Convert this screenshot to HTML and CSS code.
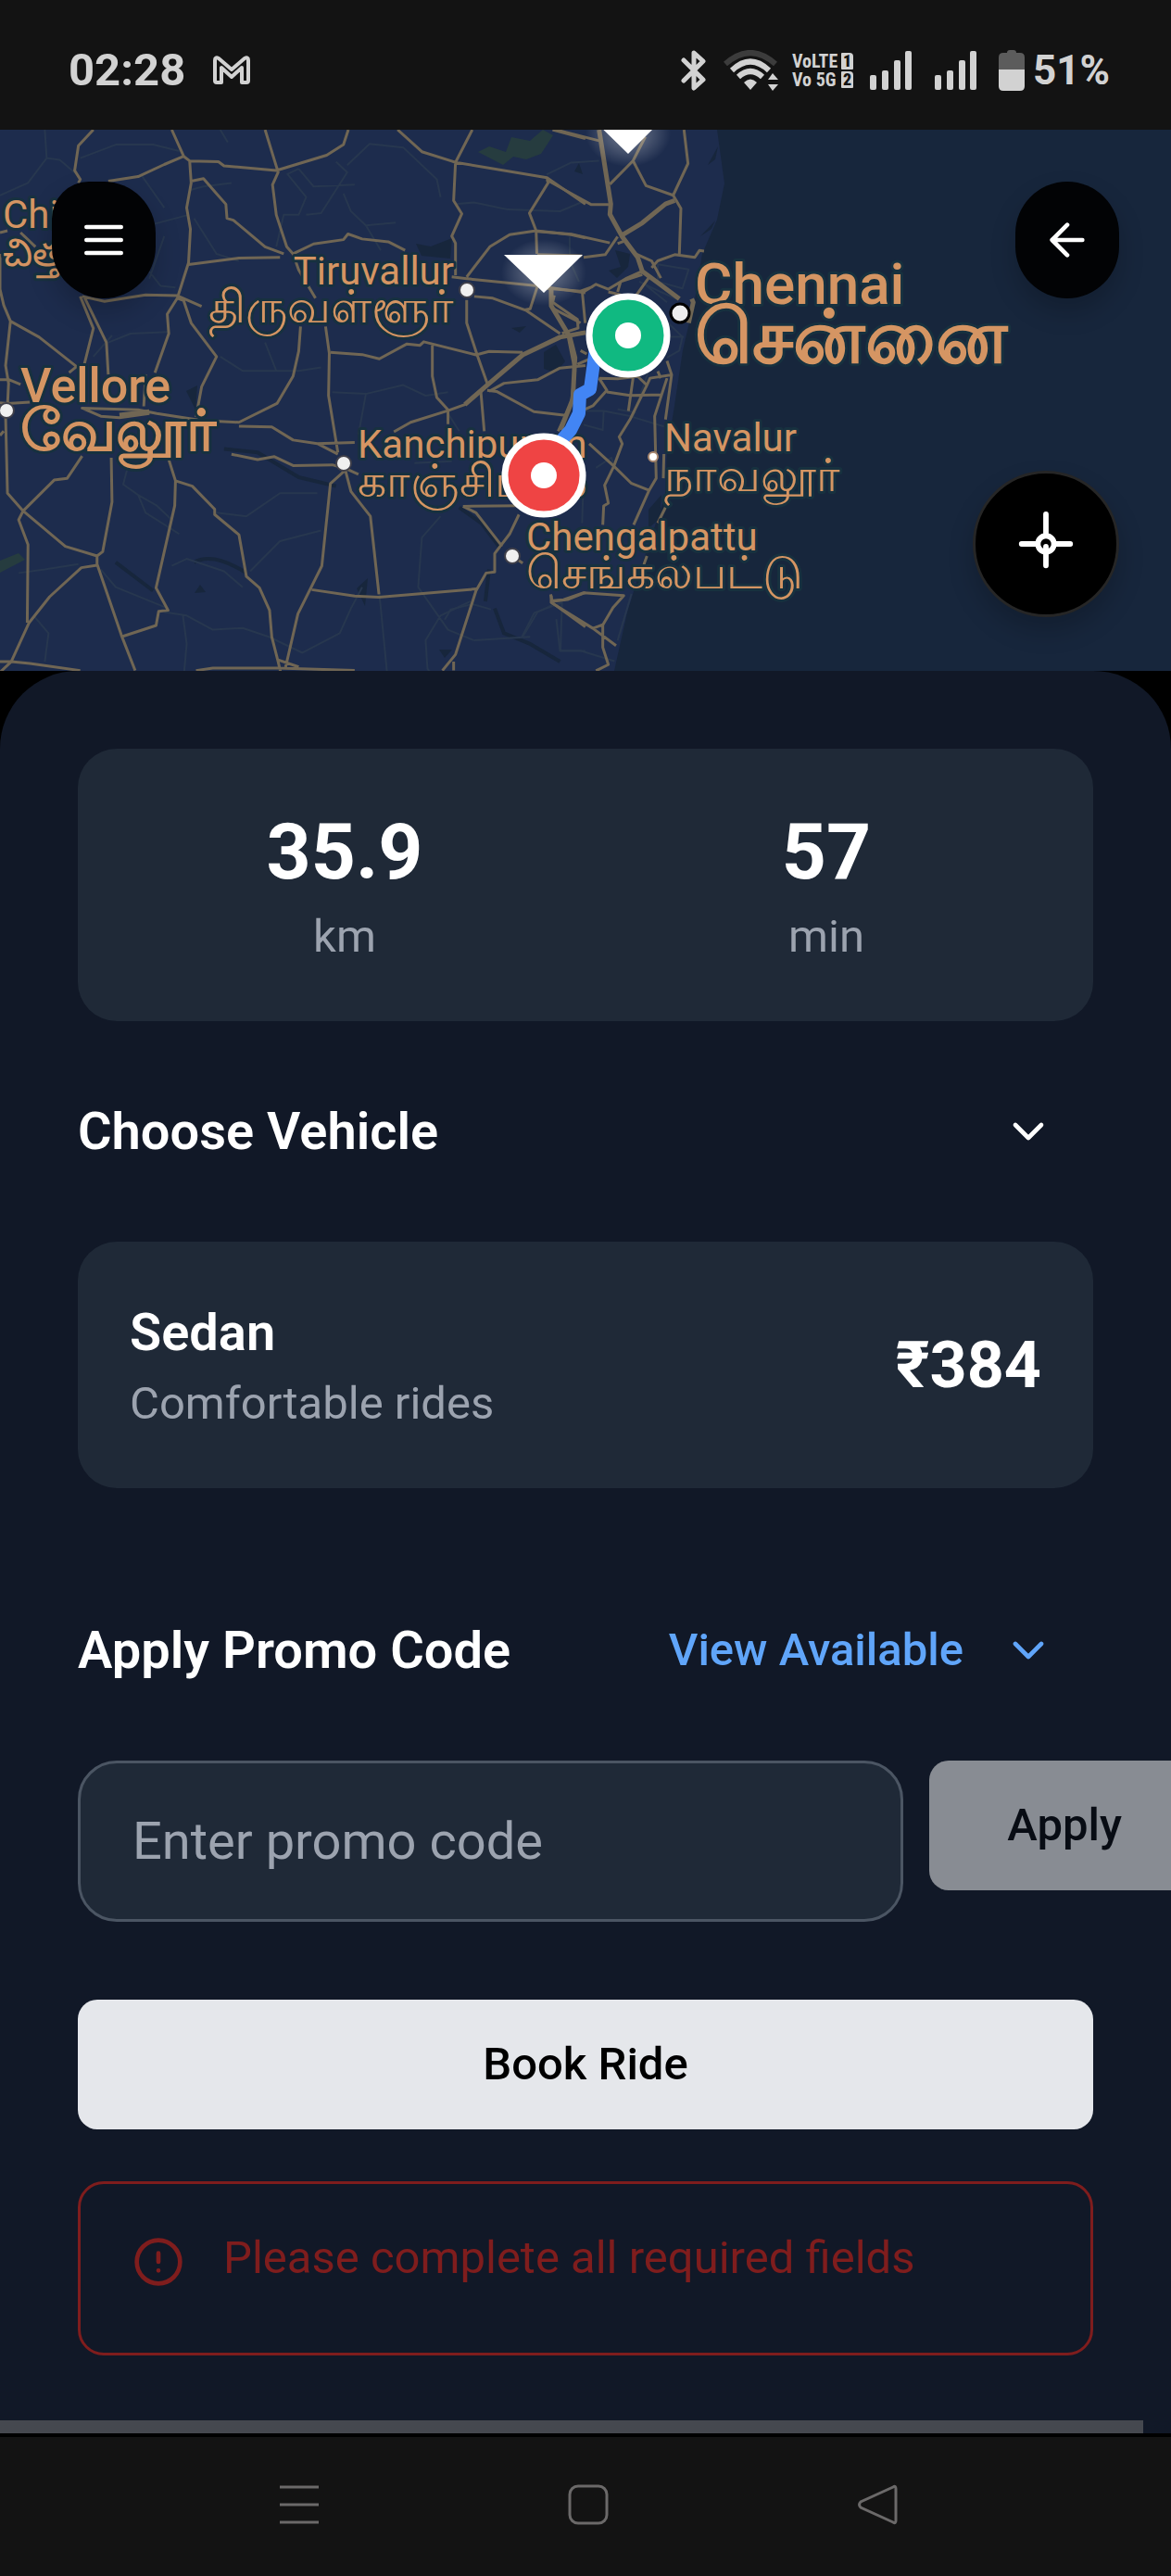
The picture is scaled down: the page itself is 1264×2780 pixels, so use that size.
FILE: index.html
```html
<!DOCTYPE html>
<html lang="en">
<head>
<meta charset="utf-8">
<meta name="viewport" content="width=device-width, initial-scale=1">
<title>Book a ride</title>
<link rel="stylesheet" href="styles.css">
</head>
<body>
<header class="status">
  <div class="status-group">
    <time class="clock">02:28</time>
    <svg class="mail" width="40" height="32" viewBox="0 0 40 32" aria-label="Gmail"><path d="M2 27V5Q2 1 6 3L20 15L34 3Q38 1 38 5V27Q38 29 36 29H31V13L20 23L9 13V29H4Q2 29 2 27Z" fill="none" stroke="#d2d2d2" stroke-width="4" stroke-linejoin="round"/></svg>
  </div>
  <div class="status-group status-right">
    <svg width="28" height="44" viewBox="0 0 28 44" aria-label="Bluetooth"><path d="M3 11L24 32L14 41V3L24 12L3 33" fill="none" stroke="#d2d2d2" stroke-width="5" stroke-linejoin="round" stroke-linecap="round"/></svg>
    <svg class="wifi" width="60" height="44" viewBox="0 0 60 44" aria-label="Wi-Fi">
      <g fill="none" stroke-width="6"><path d="M2 15Q29-9 56 15" stroke="#3c3c3c"/><path d="M9 22Q29 3 49 22" stroke="#d2d2d2"/><path d="M16 29Q29 17 42 29" stroke="#d2d2d2"/></g>
      <path d="M22 35Q29 28 36 35L29 43ZM48 32L53 25L59 32ZM48 37H59L53 44Z" fill="#d2d2d2"/>
    </svg>
    <div class="volte"><span class="volte-line">VoLTE<b class="sim">1</b></span><span class="volte-line">Vo 5G<b class="sim">2</b></span></div>
    <svg class="bars" width="46" height="44" viewBox="0 0 46 44" aria-label="Signal, SIM 1"><g fill="#d2d2d2"><rect y="27" width="7" height="16" rx="2"/><rect x="13" y="22" width="7" height="21" rx="2"/><rect x="26" y="11" width="7" height="32" rx="2"/><rect x="38" y="1" width="7" height="42" rx="2"/></g></svg>
    <svg class="bars" width="46" height="44" viewBox="0 0 46 44" aria-label="Signal, SIM 2"><g fill="#d2d2d2"><rect y="27" width="7" height="16" rx="2"/><rect x="13" y="22" width="7" height="21" rx="2"/><rect x="26" y="11" width="7" height="32" rx="2"/><rect x="38" y="1" width="7" height="42" rx="2"/></g></svg>
    <svg width="28" height="44" viewBox="0 0 28 44" aria-label="Battery"><path d="M9 3Q9 0 12 0H16Q19 0 19 3H23Q28 3 28 8V21H0V8Q0 3 5 3Z" fill="#5c5c5c"/><path d="M0 21H28V39Q28 44 23 44H5Q0 44 0 39Z" fill="#d2d2d2"/></svg>
    <span class="percent">51%</span>
  </div>
</header>

<main>
  <section class="map" aria-label="Route map">
    <svg class="map-canvas" viewBox="0 0 1264 584" preserveAspectRatio="xMidYMid slice">
      <defs>
        <radialGradient id="glow"><stop offset="0" stop-color="#fff" stop-opacity=".4"/><stop offset="1" stop-color="#fff" stop-opacity="0"/></radialGradient>
      </defs>
      <rect width="1264" height="584" fill="#17263c"/>
      <path d="M0 0H774L782 58L774 97L758 134L750 183L737 238L728 298L720 346L718 395L693 469L677 521L663 584H0Z" fill="#1d2c4d"/>
      <g fill="#263c3f">
        <path d="M516 24L528 18L546 24L552 8L572 12L586 0L597 6L584 26L568 32L554 29L543 38Z"/>
        <path d="M0 465L20 457L27 464L0 478Z"/>
      </g>
      <g fill="#17263c">
        <path d="M449 123L465 126L488 117L486 139L455 136Z"/><path d="M587 240L600 232L610 250L600 262L587 258Z"/><path d="M664 130L680 134L678 148L666 160L657 152L670 148Z"/><path d="M201 282L213 276L211 302Z"/><path d="M385 495L397 484L394 514Z"/><path d="M210 500L216 491L222 499Z"/><path d="M552 214L568 212L561 219Z"/><path d="M474 561L488 561L480 570Z"/><path d="M620 45L625 36L629 48Z"/><path d="M700 410L714 394L712 420L700 430Z"/><path d="M764 38L775 18L772 32ZM756 115L772 98L768 107Z"/>
      </g>
      <!-- rivers -->
      <g class="river" transform="scale(.403 .3827)">
        <path d="M600 900L690 910L800 980L900 1005M1230 1065L1290 1110L1340 1180M1310 1240L1300 1330M1325 1350L1350 1420L1420 1450L1500 1500M310 1220L410 1300M520 1220Q570 1190 660 1250"/>
      </g>
      <!-- local roads -->
      <g class="minor" transform="scale(.403 .3827)">
        <path d="M120 0L125 80L75 150L0 185M125 80L160 85L210 130M215 80L310 42L410 42L480 60M290 300L505 240M400 400L430 440L470 445M380 130L440 220M510 170L545 160L620 150M520 250L580 350L640 370M610 35L590 0M800 110L770 125L820 190L800 240L760 240L740 330M800 110L840 160L950 155M930 100L990 40L1080 50L1170 140L1180 190M820 240L860 235L930 120L900 90M920 180L940 230L980 270L1060 262M980 270L1020 340M1220 210L1270 205L1360 225L1500 230L1568 200M290 600L350 575L450 570M590 640L650 680L800 680L860 670M710 600L740 680M890 740L980 745L960 860M980 745L1080 720L1140 750L1200 740M340 960L330 1000L370 1030L420 1060L460 1100M370 1030L390 1080L480 1140M580 1080L660 1090L750 1025L850 1025M460 1230L500 1210L600 1245L650 1290M670 1245L750 1160L860 1130M490 1370L500 1450L490 1568M440 1360L500 1370L570 1410L650 1405L720 1430L810 1475L910 1420L940 1350L970 1290M1000 1150L1020 1350L1040 1568M1180 1090L1130 1150L1120 1290L1200 1410L1270 1440M1260 1330L1180 1370L1140 1440L1145 1520L1180 1568M1400 1430L1440 1360L1480 1340M270 1240L310 1290L380 1320L450 1350M90 1370L130 1420L120 1500M50 1250L120 1240L210 1225M440 300L400 420M250 640L300 580M1110 940L1210 935M1200 800L1230 850"/>
        <path d="M1490 1380L1500 1470L1568 1470M1270 1440L1420 1430"/>
      </g>
      <g class="minor" transform="translate(480 0) scale(.3333 .3724)">
        <path d="M330 130L410 95L500 90M690 390L790 405L770 460L690 440ZM630 440L700 470L750 490M650 450L720 500M440 815L515 815L600 830L710 860M515 815L512 870L450 855M660 700L610 830M560 810L620 820M405 310V380L435 440M700 540L770 600L760 640L720 660M730 600H775M490 980L540 950L550 980M450 1000L445 1140M0 1420L20 1390L90 1375L150 1390M250 1470L290 1400L380 1370L375 1510L440 1510L550 1540M605 1345L560 1480"/>
      </g>
      <!-- highways -->
      <g class="road" transform="scale(.403 .3827)">
        <path d="M250 0L210 45L200 115L215 140L210 150M460 0L492 75L440 98L370 132L290 145M492 75L508 88L585 90L600 102L740 115L875 72L920 42L933 0M508 88L512 150L500 220L510 280L505 375L475 475L448 520L452 575L415 685M512 145L545 138L580 180L605 210L608 250L625 255L710 330L760 350M710 0L745 120L730 155L740 240L768 330L785 350L800 395L845 475M750 360L640 362L505 380M785 350L840 322L920 310L932 294L970 308L1040 316L1085 340M1065 0L1130 62L1208 88L1220 92L1265 0M1220 92L1465 135L1568 210M1465 135L1468 150L1418 235L1436 285L1438 350M1220 92L1215 200L1237 237L1210 300L1220 320L1220 410M1210 415L1250 420L1440 440L1568 460M1250 415L1312 330L1365 296L1436 285L1530 296L1568 305M1270 470L1320 475L1410 510L1500 575M1440 440L1420 505L1405 508M1250 480V545L1278 635L1305 715M885 628L970 634L1016 646L1090 604L1125 608L1135 598L1275 635L1310 625L1400 628M1158 608V695L1170 755L1200 790V830M1480 0L1568 25"/>
        <path d="M0 350L0 450L10 495L28 540L15 665L23 715L20 780M28 540L105 585L205 668L185 685M0 705H25L55 718M0 290L20 285M55 290L95 330M215 470L250 560L225 665M225 470L285 600L290 690M220 470L280 484L390 466L475 468L540 498M475 475L492 482L512 545L580 640L540 725L525 810M0 770L20 772L80 768M805 555L800 625L785 695L742 772L640 825L540 820L420 800L370 790L220 785L270 808L320 812L400 800M390 690L385 780M872 555L882 630L880 750L905 910M640 836L728 838L785 875L850 885L950 882M850 885L905 915M620 915L690 930L735 922L785 947L890 945L925 955L960 972M925 960L885 998L862 1230L798 1365L765 1515M925 960L940 1020L992 1090L1015 1310M835 1297L950 1315L1015 1318L1275 1295M220 920L180 983L145 988L62 1075L175 1175L260 1202L275 1190L300 1050L298 925M452 930L470 990L468 1060L418 1292L450 1355L425 1358L418 1398L325 1430M470 990L515 1005L575 1070V1085L640 1142L660 1260L695 1292L722 1355L728 1430L745 1500L760 1568M260 1202V1225L325 1425L362 1525M260 1228L218 1235L133 1317L78 1390L30 1500L0 1530M15 810L20 1025L62 1075L50 1100L75 1170L73 1390M10 850L0 862M0 1500H30L80 1505L215 1525M525 1525L570 1518L745 1518L950 1525M745 1495L800 1515M1240 1062L1390 1060M1240 1062L1275 1080L1345 1175M1390 1085L1365 1140L1325 1195V1247L1302 1250L1275 1300L1220 1480L1185 1525M1215 1500V1525M1372 1202L1400 1222M1475 1310L1480 1335L1568 1402M1480 1330L1520 1325L1568 1305M1055 852L1100 825L1200 792L1245 775L1305 720L1400 635L1500 585L1568 570M1310 738L1350 715L1440 705L1500 672L1568 665M1305 735L1330 738L1430 795L1520 806M1288 740L1297 850M1520 575L1540 680L1530 770L1495 850"/>
      </g>
      <g class="trunk" transform="scale(.403 .3827)"><path d="M1245 775L1305 720L1400 635L1500 585L1568 572M320 805L400 795"/></g>
      <g class="road" transform="translate(480 0) scale(.3333 .3724)">
        <path d="M360 0L500 32M330 145L420 190L475 217L535 217M535 158L610 90L650 20M610 90L652 162L740 190L788 98L775 0M740 190L765 228L760 360M300 295L410 303L535 328M450 370L520 362L560 310M560 330L590 320M450 470L490 448L530 462L590 430L640 410M445 365L300 362M445 465L455 560M330 460L440 468L480 455M355 480L350 500L430 550L432 575L380 590M355 520L440 560M620 360L670 380L700 430M670 400L690 380L745 362L810 370L825 350L840 352M560 470L570 440L640 420M530 470L600 485M620 480L660 430M480 660L430 680M440 640L460 650M500 720L525 755L480 800L455 810M525 760L600 770L705 768M500 720L560 722L625 715L655 740L665 720L735 710M610 720L595 815M655 740L600 840L565 890L575 910L548 975L518 1030L530 1082L515 1090L512 1145M720 670L735 710L715 840M720 720L680 830L685 1010L662 1045L612 1145M468 910L548 975L605 1025L662 1045M700 720L690 700M715 1095L690 1140M710 940L708 1010M655 1235L645 1260M345 1350V1370L480 1445L555 1495M480 1445L510 1435M350 1365L385 1362L450 1342L580 1350L545 1385L512 1435V1500L530 1550L490 1568"/>
      </g>
      <g class="trunk" transform="translate(480 0) scale(.3333 .3724)"><path d="M500 0L538 215L535 245L575 310L625 370L640 410L700 450L760 490M745 205L715 215L640 270L570 308M800 490L805 500L790 560M345 460V510L405 600L422 660L415 780L375 870"/></g>

      <g class="place">
        <text x="3" y="106">Chittoor</text><text x="3" y="147">చిత్తూరు</text>
        <text x="490" y="167" text-anchor="end">Tiruvallur</text><text class="local" x="490" y="208" text-anchor="end">திருவள்ளூர்</text>
        <text x="386" y="354">Kanchipuram</text><text class="local" x="386" y="396">காஞ்சிபுரம்</text>
        <text x="568" y="454">Chengalpattu</text><text class="local" x="568" y="495">செங்கல்பட்டு</text>
        <text x="717" y="347">Navalur</text><text class="local" x="717" y="390">நாவலூர்</text>
      </g>
      <g class="place town"><text x="22" y="294">Vellore</text><text class="local" x="22" y="346">வேலூர்</text></g>
      <g class="place city"><text x="750" y="188">Chennai</text><text class="local" x="750" y="251">சென்னை</text></g>

      <g fill="#f0f0f0" stroke="#40404a" stroke-width="2"><circle cx="504" cy="173" r="8"/><circle cx="7" cy="303" r="8"/><circle cx="371" cy="360" r="8"/><circle cx="553" cy="460" r="8"/></g>
      <circle cx="734" cy="198" r="10" fill="#eee" stroke="#000" stroke-width="3"/>
      <circle cx="705" cy="353" r="5" fill="#fff" stroke="#a98870" stroke-width="2"/>

      <path d="M643 236L637 280L626 286L625 306L616 324L600 342" fill="none" stroke="#4285f4" stroke-width="14" stroke-linejoin="round"/>
      <g stroke="#fff" stroke-width="7"><circle cx="678" cy="222" r="42" fill="#10b981"/><circle cx="587" cy="373" r="42" fill="#ef4444"/></g>
      <g fill="#fff"><circle cx="678" cy="222" r="14"/><circle cx="587" cy="373" r="14"/></g>
      <ellipse cx="587" cy="154" rx="46" ry="36" fill="url(#glow)"/><ellipse cx="678" cy="4" rx="46" ry="36" fill="url(#glow)"/>
      <path d="M544 135H629L587 176ZM635-16H720L678 26Z" fill="#fff"/>
    </svg>
    <div class="map-controls">
      <button class="round menu" aria-label="Menu"><svg width="56" height="56" viewBox="0 0 24 24"><path d="M4 6h16M4 12h16M4 18h16"/></svg></button>
      <button class="round" aria-label="Back"><svg width="56" height="56" viewBox="0 0 24 24"><path d="M12 19l-7-7 7-7M19 12H5"/></svg></button>
    </div>
    <button class="locate" aria-label="My location"><svg width="70" height="70" viewBox="0 0 24 24"><circle cx="12" cy="12" r="3"/><path d="M12 1v7M3 12h6M15 12h6M12 13v7"/></svg></button>
  </section>

  <section class="panel">
    <div class="card trip">
      <div class="stat"><strong class="stat-value">35.9</strong><span class="muted">km</span></div>
      <div class="stat"><strong class="stat-value">57</strong><span class="muted">min</span></div>
    </div>

    <div class="row vehicle-row">
      <h2 class="title">Choose Vehicle</h2>
      <button class="toggle" aria-label="Show vehicles"><svg class="chevron" viewBox="0 0 24 24"><path d="M6 9l6 6 6-6"/></svg></button>
    </div>

    <div class="card vehicle">
      <div><h3 class="title">Sedan</h3><p class="muted">Comfortable rides</p></div>
      <strong class="price">₹384</strong>
    </div>

    <div class="row promo-row">
      <h2 class="title"><label for="promo">Apply Promo Code</label></h2>
      <button class="toggle link">View Available <svg class="chevron" viewBox="0 0 24 24"><path d="M6 9l6 6 6-6"/></svg></button>
    </div>

    <form class="promo">
      <input id="promo" class="promo-input" type="text" placeholder="Enter promo code">
      <button class="btn apply" type="button" disabled>Apply</button>
    </form>

    <button class="btn book">Book Ride</button>

    <div class="alert" role="alert">
      <svg class="alert-icon" viewBox="0 0 24 24"><circle cx="12" cy="12" r="10"/><path d="M12 8v4M12 16h.01"/></svg>
      <p class="alert-text">Please complete all required fields</p>
    </div>
  </section>
  <div class="scroll-track"><div class="scroll-thumb"></div></div>
</main>

<nav class="system-nav" aria-label="System">
  <button class="nav-key" aria-label="Recent apps"><svg width="44" height="44" viewBox="0 0 44 44"><path d="M1 3H43M1 22H43M1 41H43"/></svg></button>
  <button class="nav-key" aria-label="Home"><svg width="44" height="44" viewBox="0 0 44 44"><rect x="2" y="2" width="40" height="40" rx="9"/></svg></button>
  <button class="nav-key" aria-label="Back"><svg width="44" height="44" viewBox="0 0 44 44"><path d="M39 3Q42 1 42 5V39Q42 43 39 41L4 25Q1 22 4 19Z"/></svg></button>
</nav>
</body>
</html>
```
FILE: styles.css
```css
* { box-sizing: border-box; }

body {
  margin: 0;
  background: #000;
  color: #fff;
  font-family: Roboto, "Noto Sans", sans-serif;
  font-size: 49px;
  line-height: 70px;
  overflow-x: hidden;
}

h2, h3, p { margin: 0; font-weight: 400; }

button {
  border: 0;
  padding: 0;
  background: none;
  color: inherit;
  font: inherit;
}

svg { display: block; flex: none; }

/* Status bar */
.status {
  display: flex;
  justify-content: space-between;
  align-items: center;
  height: 140px;
  padding: 12px 66px 0 74px;
  background: #131313;
  color: #d2d2d2;
}
.status-group { display: flex; align-items: center; }
.clock { font-weight: 700; font-size: 49px; }
.mail { margin-left: 30px; }
.wifi { margin-left: 18px; }
.volte {
  display: flex;
  flex-direction: column;
  width: 66px;
  margin-left: 14px;
  font-family: "Roboto Condensed", "Liberation Sans Narrow", Roboto, sans-serif;
  font-weight: 700;
  font-size: 20px;
  line-height: 20px;
}
.volte-line { display: flex; justify-content: space-between; align-items: center; white-space: nowrap; }
.sim {
  width: 13px;
  border-radius: 1px 4px 1px 1px;
  background: #d2d2d2;
  color: #131313;
  font-size: 18px;
  line-height: 18px;
  text-align: center;
}
.bars { margin-left: 18px; }
.bars + .bars { margin: 0 23px 0 24px; }
.percent { margin-left: 9px; font-weight: 700; font-size: 44px; }

/* Map */
.map { position: relative; height: 584px; overflow: hidden; }
.map-canvas { width: 100%; height: 100%; }
.minor, .river, .road, .trunk { fill: none; stroke-linejoin: round; }
.minor path, .river path, .road path, .trunk path { vector-effect: non-scaling-stroke; }
.minor { stroke: #27374f; stroke-width: 2px; }
.river { stroke: #17263c; stroke-width: 4px; }
.road { stroke: #706654; stroke-width: 3px; }
.trunk { stroke: #706654; stroke-width: 5px; }
.place {
  fill: #d59563;
  stroke: #17313f;
  stroke-width: 6px;
  stroke-linejoin: round;
  paint-order: stroke;
  font-size: 42px;
}
.local { font-size: 49px; }
.town { font-size: 52px; font-weight: 500; }
.city { font-size: 62px; font-weight: 500; }
.town .local { font-size: 62px; font-weight: 700; }
.city .local { font-size: 80px; font-weight: 700; }

.map-controls {
  position: absolute;
  inset: 56px 56px auto;
  display: flex;
  justify-content: space-between;
}
.round, .locate {
  display: flex;
  align-items: center;
  justify-content: center;
  background: #020305;
  box-shadow: 0 14px 28px #0003;
  stroke: #fff;
  stroke-width: 2;
  stroke-linecap: round;
  stroke-linejoin: round;
  fill: none;
}
.round { width: 112px; height: 126px; border-radius: 56px; }
.menu { border-top-left-radius: 40px; }
.locate {
  position: absolute;
  right: 56px;
  bottom: 58px;
  width: 158px;
  height: 158px;
  border: 3px solid #262626;
  border-radius: 50%;
  background: #000;
}

/* Booking panel */
.panel {
  padding: 84px 84px 70px;
  border-radius: 84px 84px 0 0;
  background: #111827;
  overflow: hidden;
}
.card { padding: 56px; border-radius: 42px; background: #1f2937; }
.trip { display: grid; grid-template-columns: 1fr 1fr; gap: 56px; text-align: center; }
.stat { display: flex; flex-direction: column; }
.stat-value { font-size: 84px; line-height: 112px; }
.muted { color: #9ca3af; }
.title { font-size: 56px; line-height: 84px; font-weight: 600; }
.row { display: flex; align-items: center; justify-content: space-between; }
.vehicle-row { margin: 56px 0; }
.promo-row { margin: 112px 0 56px; }
.toggle { display: flex; align-items: center; gap: 42px; height: 126px; padding: 0 42px; }
.link { color: #60a5fa; font-weight: 500; }
.chevron, .alert-icon {
  width: 56px;
  height: 56px;
  fill: none;
  stroke: currentColor;
  stroke-width: 2;
  stroke-linecap: round;
  stroke-linejoin: round;
}
.vehicle { display: flex; align-items: center; justify-content: space-between; }
.price { font-size: 70px; line-height: 98px; }

/* The promo form runs past the panel padding, off the right edge */
.promo { display: flex; align-items: flex-start; gap: 28px; margin-right: -115px; }
.promo-input {
  flex: 1;
  min-width: 0;
  height: 174px;
  padding: 0 56px;
  border: 3px solid #4b5563;
  border-radius: 42px;
  background: #1f2937;
  color: #fff;
  font: inherit;
  font-size: 56px;
}
.promo-input::placeholder { color: #9ca3af; opacity: 1; }
.btn {
  height: 140px;
  padding: 0 84px;
  border-radius: 21px;
  background: #e5e7eb;
  color: #000;
  font-weight: 500;
}
.apply { background: #888c93; color: #080c14; }
.book { width: 100%; margin-top: 84px; display: block; }
.alert {
  display: flex;
  gap: 42px;
  margin-top: 56px;
  padding: 45px 56px 67px;
  border: 3px solid #7f1d1d;
  border-radius: 28px;
  color: #7f1d1d;
}
.alert-icon { margin-top: 11px; }

.scroll-track { height: 18px; border-bottom: 4px solid #000; background: #111827; }
.scroll-thumb { width: calc(100% - 30px); height: 14px; background: #45484f; }

/* System navigation */
.system-nav {
  display: flex;
  justify-content: center;
  align-items: center;
  gap: 268px;
  height: 150px;
  padding: 0 0 4px 6px;
  background: #131313;
}
.nav-key svg { fill: none; stroke: #6b6969; stroke-width: 3; }
```
